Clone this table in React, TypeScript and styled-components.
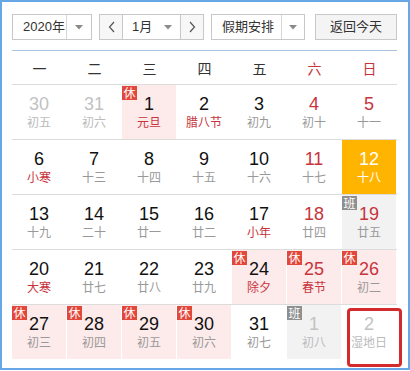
import React from 'react';
import styled, { createGlobalStyle } from 'styled-components';

const GlobalStyle = createGlobalStyle`
  body {
    margin: 0;
    background: #fff;
    font-family: 'Liberation Sans', 'Noto Sans CJK SC', sans-serif;
  }
`;

const Frame = styled.div`
  box-sizing: border-box;
  width: 410px;
  height: 370px;
  border: 2px solid #68a7e6;
  padding: 12px 0 0 10px;
  background: #fff;
`;

const Toolbar = styled.div`
  display: flex;
  height: 26px;
  font-family: 'Liberation Sans', 'Noto Sans CJK SC', sans-serif;
  font-size: 13px;
  color: #333;
`;

const Select = styled.div<{ $w: number; $mr: number }>`
  box-sizing: border-box;
  display: flex;
  width: ${p => p.$w}px;
  height: 26px;
  margin-right: ${p => p.$mr}px;
  border: 1px solid #c8c8c8;
  background: #fff;
`;

const SelectText = styled.div<{ $pl: number }>`
  flex: 1;
  padding-left: ${p => p.$pl}px;
  line-height: 24px;
  white-space: nowrap;
`;

const ArrowBox = styled.div<{ $sep?: boolean; $w: number }>`
  display: flex;
  align-items: center;
  justify-content: center;
  width: ${p => p.$w}px;
  border-left: ${p => (p.$sep ? '1px solid #d6d6d6' : 'none')};
`;

const NavButton = styled.div<{ $side: 'left' | 'right' }>`
  display: flex;
  align-items: center;
  justify-content: center;
  width: 22px;
  background: #f7f7f7;
  border-${p => (p.$side === 'left' ? 'right' : 'left')}: 1px solid #c8c8c8;
`;

const TodayButton = styled.div`
  box-sizing: border-box;
  width: 82px;
  height: 26px;
  border: 1px solid #c8c8c8;
  background: #f4f4f4;
  text-align: center;
  line-height: 24px;
`;

const Divider = styled.div`
  width: 385px;
  height: 1px;
  margin-top: 10px;
  background: #a9c4de;
`;

const WeekHeader = styled.div`
  display: grid;
  grid-template-columns: repeat(7, 55px);
  height: 33px;
  align-items: center;
  font-family: 'Noto Sans CJK SC', sans-serif;
  font-size: 14px;
`;

const WeekDay = styled.div<{ $red: boolean }>`
  text-align: center;
  color: ${p => (p.$red ? '#c8343c' : '#333')};
`;

const Week = styled.div`
  box-sizing: border-box;
  display: grid;
  grid-template-columns: repeat(7, 54px);
  column-gap: 1px;
  width: 385px;
  height: 55px;
  border-top: 1px solid #dcdcdc;
`;

const Cell = styled.div<{ $bg: string }>`
  position: relative;
  display: flex;
  flex-direction: column;
  align-items: center;
  justify-content: center;
  height: 54px;
  background: ${p => p.$bg};
`;

const DayNum = styled.div<{ $color: string }>`
  font-family: 'Liberation Sans', Arial, sans-serif;
  font-size: 18px;
  line-height: 20px;
  color: ${p => p.$color};
`;

const Lunar = styled.div<{ $color: string }>`
  font-family: 'Noto Sans CJK SC', sans-serif;
  font-size: 12px;
  line-height: 16px;
  color: ${p => p.$color};
`;

const Badge = styled.span<{ $kind: 'rest' | 'work' }>`
  position: absolute;
  top: 1px;
  left: 0;
  width: 15px;
  height: 14px;
  background: ${p => (p.$kind === 'rest' ? '#e2473b' : '#8f8f8f')};
  color: #fff;
  font-family: 'Noto Sans CJK SC', sans-serif;
  font-size: 12px;
  line-height: 14px;
  text-align: center;
`;

const Marker = styled.div`
  position: absolute;
  left: 5px;
  top: 3px;
  width: 55px;
  height: 59px;
  box-sizing: border-box;
  border: 3px solid #d42a2c;
  border-radius: 4px;
  z-index: 2;
`;

const Caret = () => (
  <svg width="8" height="5" viewBox="0 0 8 5">
    <path d="M0 0 L8 0 L4 4.5 Z" fill="#8a8a8a" />
  </svg>
);

const Chevron = ({ dir }: { dir: 'left' | 'right' }) => (
  <svg width="7" height="12" viewBox="0 0 7 12">
    <path
      d={dir === 'left' ? 'M6 1 L1.5 6 L6 11' : 'M1 1 L5.5 6 L1 11'}
      fill="none"
      stroke="#555"
      strokeWidth="1.2"
    />
  </svg>
);

type Day = {
  n: number;
  lunar: string;
  other?: boolean;
  badge?: 'rest' | 'work';
  fest?: boolean;
  today?: boolean;
  mark?: boolean;
};

const weeks: Day[][] = [
  [
    { n: 30, lunar: '初五', other: true },
    { n: 31, lunar: '初六', other: true },
    { n: 1, lunar: '元旦', badge: 'rest', fest: true },
    { n: 2, lunar: '腊八节', fest: true },
    { n: 3, lunar: '初九' },
    { n: 4, lunar: '初十' },
    { n: 5, lunar: '十一' },
  ],
  [
    { n: 6, lunar: '小寒', fest: true },
    { n: 7, lunar: '十三' },
    { n: 8, lunar: '十四' },
    { n: 9, lunar: '十五' },
    { n: 10, lunar: '十六' },
    { n: 11, lunar: '十七' },
    { n: 12, lunar: '十八', today: true },
  ],
  [
    { n: 13, lunar: '十九' },
    { n: 14, lunar: '二十' },
    { n: 15, lunar: '廿一' },
    { n: 16, lunar: '廿二' },
    { n: 17, lunar: '小年', fest: true },
    { n: 18, lunar: '廿四' },
    { n: 19, lunar: '廿五', badge: 'work' },
  ],
  [
    { n: 20, lunar: '大寒', fest: true },
    { n: 21, lunar: '廿七' },
    { n: 22, lunar: '廿八' },
    { n: 23, lunar: '廿九' },
    { n: 24, lunar: '除夕', badge: 'rest', fest: true },
    { n: 25, lunar: '春节', badge: 'rest', fest: true },
    { n: 26, lunar: '初二', badge: 'rest' },
  ],
  [
    { n: 27, lunar: '初三', badge: 'rest' },
    { n: 28, lunar: '初四', badge: 'rest' },
    { n: 29, lunar: '初五', badge: 'rest' },
    { n: 30, lunar: '初六', badge: 'rest' },
    { n: 31, lunar: '初七' },
    { n: 1, lunar: '初八', other: true, badge: 'work' },
    { n: 2, lunar: '湿地日', other: true, mark: true },
  ],
];

const weekNames = ['一', '二', '三', '四', '五', '六', '日'];

const RED = '#c8343c';

function cellStyle(d: Day, col: number) {
  const weekend = col >= 5;
  let bg = '#fff';
  if (d.today) bg = '#ffb500';
  else if (d.badge === 'rest') bg = '#fdeaea';
  else if (d.badge === 'work') bg = '#f2f2f2';

  let num = weekend ? RED : '#111';
  let lunar = d.fest ? RED : '#999';
  if (d.other) {
    num = '#c2c2c2';
    lunar = '#bbb';
  }
  if (d.today) {
    num = '#fff';
    lunar = '#fff';
  }
  return { bg, num, lunar };
}

export default function App() {
  return (
    <>
      <GlobalStyle />
      <Frame>
        <Toolbar>
          <Select $w={80} $mr={7}>
            <SelectText $pl={10}>2020年</SelectText>
            <ArrowBox $sep $w={24}>
              <Caret />
            </ArrowBox>
          </Select>
          <Select $w={105} $mr={7}>
            <NavButton $side="left">
              <Chevron dir="left" />
            </NavButton>
            <SelectText $pl={9}>1月</SelectText>
            <ArrowBox $w={24}>
              <Caret />
            </ArrowBox>
            <NavButton $side="right">
              <Chevron dir="right" />
            </NavButton>
          </Select>
          <Select $w={94} $mr={10}>
            <SelectText $pl={10}>假期安排</SelectText>
            <ArrowBox $sep $w={22}>
              <Caret />
            </ArrowBox>
          </Select>
          <TodayButton>返回今天</TodayButton>
        </Toolbar>
        <Divider />
        <WeekHeader>
          {weekNames.map((w, i) => (
            <WeekDay key={w} $red={i >= 5}>
              {w}
            </WeekDay>
          ))}
        </WeekHeader>
        {weeks.map((week, wi) => (
          <Week key={wi}>
            {week.map((d, ci) => {
              const s = cellStyle(d, ci);
              return (
                <Cell key={ci} $bg={s.bg}>
                  {d.badge && <Badge $kind={d.badge}>{d.badge === 'rest' ? '休' : '班'}</Badge>}
                  <DayNum $color={s.num}>{d.n}</DayNum>
                  <Lunar $color={s.lunar}>{d.lunar}</Lunar>
                  {d.mark && <Marker />}
                </Cell>
              );
            })}
          </Week>
        ))}
      </Frame>
    </>
  );
}
